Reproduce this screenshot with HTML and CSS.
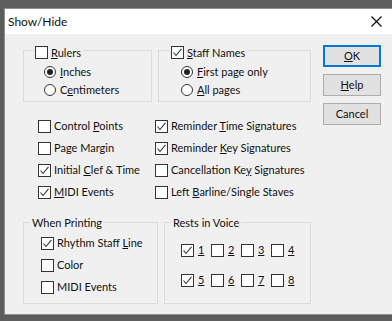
FILE: index.html
```html
<!DOCTYPE html>
<html>
<head>
<meta charset="utf-8">
<link rel="stylesheet" href="styles.css">
</head>
<body>
<div class="window">
  <div class="titlebar">
    <span class="title">Show/Hide</span>
    <svg class="close" width="11" height="11" viewBox="0 0 11 11"><path d="M0.5 0.5 L10.5 10.5 M10.5 0.5 L0.5 10.5" stroke="#000" stroke-width="1.1" fill="none"/></svg>
  </div>
  <div class="content">
    <div class="main">
      <div class="top-row">
        <div class="group g-rulers">
          <div class="legend lg-rulers">
            <span class="cb"><span class="box"></span><span class="lbl"><u>R</u>ulers</span></span>
          </div>
          <div class="radios r-rulers">
            <div class="radio"><span class="circle on"></span><span class="lbl"><u>I</u>nches</span></div>
            <div class="radio"><span class="circle"></span><span class="lbl">C<u>e</u>ntimeters</span></div>
          </div>
        </div>
        <div class="group g-staff">
          <div class="legend lg-staff">
            <span class="cb"><span class="box checked"><svg viewBox="0 0 11 11"><path d="M1.5 5.5 L4 8.5 L9.5 1.8" stroke="#333" stroke-width="1.1" fill="none"/></svg></span><span class="lbl"><u>S</u>taff Names</span></span>
          </div>
          <div class="radios r-staff">
            <div class="radio"><span class="circle on"></span><span class="lbl"><u>F</u>irst page only</span></div>
            <div class="radio"><span class="circle"></span><span class="lbl"><u>A</u>ll pages</span></div>
          </div>
        </div>
      </div>

      <div class="checks">
        <div class="cb row"><span class="box"></span><span class="lbl">Control <u>P</u>oints</span></div>
        <div class="cb row"><span class="box checked"><svg viewBox="0 0 11 11"><path d="M1.5 5.5 L4 8.5 L9.5 1.8" stroke="#333" stroke-width="1.1" fill="none"/></svg></span><span class="lbl">Reminder <u>T</u>ime Signatures</span></div>
        <div class="cb row"><span class="box"></span><span class="lbl">Page Margin</span></div>
        <div class="cb row"><span class="box checked"><svg viewBox="0 0 11 11"><path d="M1.5 5.5 L4 8.5 L9.5 1.8" stroke="#333" stroke-width="1.1" fill="none"/></svg></span><span class="lbl">Reminder <u>K</u>ey Signatures</span></div>
        <div class="cb row"><span class="box checked"><svg viewBox="0 0 11 11"><path d="M1.5 5.5 L4 8.5 L9.5 1.8" stroke="#333" stroke-width="1.1" fill="none"/></svg></span><span class="lbl">Initial <u>C</u>lef &amp; Time</span></div>
        <div class="cb row"><span class="box"></span><span class="lbl">Cancellation Ke<u>y</u> Signatures</span></div>
        <div class="cb row"><span class="box checked"><svg viewBox="0 0 11 11"><path d="M1.5 5.5 L4 8.5 L9.5 1.8" stroke="#333" stroke-width="1.1" fill="none"/></svg></span><span class="lbl"><u>M</u>IDI Events</span></div>
        <div class="cb row"><span class="box"></span><span class="lbl">Left <u>B</u>arline/Single Staves</span></div>
      </div>

      <div class="bottom-row">
        <div class="group g-print">
          <div class="legend lg-text">When Printing</div>
          <div class="print-list">
            <div class="cb row"><span class="box checked"><svg viewBox="0 0 11 11"><path d="M1.5 5.5 L4 8.5 L9.5 1.8" stroke="#333" stroke-width="1.1" fill="none"/></svg></span><span class="lbl">Rhythm Staff <u>L</u>ine</span></div>
            <div class="cb row"><span class="box"></span><span class="lbl">Color</span></div>
            <div class="cb row"><span class="box"></span><span class="lbl">MIDI Events</span></div>
          </div>
        </div>
        <div class="group g-rests">
          <div class="legend lg-text">Rests in Voice</div>
          <div class="rests">
            <div class="cb num"><span class="box checked"><svg viewBox="0 0 11 11"><path d="M1.5 5.5 L4 8.5 L9.5 1.8" stroke="#333" stroke-width="1.1" fill="none"/></svg></span><span class="lbl"><u>1</u></span></div>
            <div class="cb num"><span class="box"></span><span class="lbl"><u>2</u></span></div>
            <div class="cb num"><span class="box"></span><span class="lbl"><u>3</u></span></div>
            <div class="cb num"><span class="box"></span><span class="lbl"><u>4</u></span></div>
            <div class="cb num"><span class="box checked"><svg viewBox="0 0 11 11"><path d="M1.5 5.5 L4 8.5 L9.5 1.8" stroke="#333" stroke-width="1.1" fill="none"/></svg></span><span class="lbl"><u>5</u></span></div>
            <div class="cb num"><span class="box"></span><span class="lbl"><u>6</u></span></div>
            <div class="cb num"><span class="box"></span><span class="lbl"><u>7</u></span></div>
            <div class="cb num"><span class="box"></span><span class="lbl"><u>8</u></span></div>
          </div>
        </div>
      </div>
    </div>

    <div class="buttons">
      <div class="btn default"><span><u>O</u>K</span></div>
      <div class="btn"><span><u>H</u>elp</span></div>
      <div class="btn"><span>Cancel</span></div>
    </div>
  </div>
</div>
</body>
</html>
```

FILE: styles.css
```css
html, body {
  margin: 0;
  padding: 0;
}

body {
  width: 392px;
  height: 321px;
  overflow: hidden;
  background: #5d5d5d;
  font-family: Lato, "Noto Sans", sans-serif;
  font-size: 11px;
  color: #111;
}

u {
  text-decoration: underline;
  text-decoration-thickness: 1px;
  text-underline-offset: 1px;
}

.window {
  margin: 8px 0 0 4px;
  border: 1px solid #8e8e8e;
  border-right: none;
  background: #f0f0f0;
}

.titlebar {
  height: 25px;
  background: #fff;
  display: flex;
  align-items: center;
  padding-left: 3px;
}

.title {
  font-size: 12px;
  line-height: 14px;
}

.close {
  margin-left: auto;
  margin-right: 10px;
  display: block;
}

.content {
  height: 280px;
  box-sizing: border-box;
  display: flex;
  padding-left: 18px;
}

.main {
  width: 288px;
  padding-top: 16px;
}

.top-row {
  display: flex;
  gap: 6px;
}

.group {
  border: 1px solid #dcdcdc;
  box-sizing: border-box;
}

.g-rulers { width: 129px; height: 52px; }
.g-staff { width: 153px; height: 52px; }

.legend {
  width: max-content;
  background: #f0f0f0;
  display: flex;
  align-items: center;
}

.lg-rulers, .lg-staff {
  height: 13px;
  margin-top: -5px;
  padding: 0 2px 0 1px;
}

.lg-rulers { margin-left: 10px; }
.lg-staff { margin-left: 11px; }

.lg-text {
  height: 14px;
  line-height: 14px;
  margin-top: -7px;
  margin-left: 6px;
  padding: 0 2px;
}

.cb {
  display: flex;
  align-items: center;
  gap: 3px;
  white-space: nowrap;
}

.box {
  width: 13px;
  height: 13px;
  box-sizing: border-box;
  border: 1px solid #333;
  background: #fff;
  flex: none;
  display: block;
}

.box svg {
  display: block;
  width: 11px;
  height: 11px;
}

.lbl {
  line-height: 14px;
}

.radios {
  margin-top: 4px;
}

.r-rulers { padding-left: 20px; }
.r-staff { padding-left: 22px; }

.radio {
  height: 18px;
  display: flex;
  align-items: center;
  gap: 4px;
  white-space: nowrap;
}

.circle {
  width: 12px;
  height: 12px;
  box-sizing: border-box;
  border: 1px solid #333;
  border-radius: 50%;
  background: #fff;
  flex: none;
  display: flex;
  align-items: center;
  justify-content: center;
}

.circle.on::after {
  content: "";
  width: 6px;
  height: 6px;
  border-radius: 50%;
  background: #222;
}

.checks {
  margin-top: 13px;
  padding-left: 15px;
  display: grid;
  grid-template-columns: 117px auto;
  grid-auto-rows: 22px;
}

.row {
  height: 22px;
}

.bottom-row {
  display: flex;
  gap: 6px;
  margin-top: 19px;
}

.g-print { width: 135px; height: 82px; }
.g-rests { width: 147px; height: 82px; }

.print-list {
  margin-top: 2px;
  padding-left: 17px;
}

.rests {
  margin-top: 5px;
  padding-left: 16px;
  display: grid;
  grid-template-columns: repeat(4, 30px);
  grid-auto-rows: 30px;
}

.num {
  height: 30px;
  gap: 4px;
}

.buttons {
  margin-left: 12px;
  padding-top: 11px;
  display: flex;
  flex-direction: column;
  gap: 7px;
}

.btn {
  width: 58px;
  height: 22px;
  box-sizing: border-box;
  border: 1px solid #adadad;
  background: #e1e1e1;
  display: flex;
  align-items: center;
  justify-content: center;
  line-height: 14px;
}

.btn.default {
  border: 2px solid #0078d7;
}
```
